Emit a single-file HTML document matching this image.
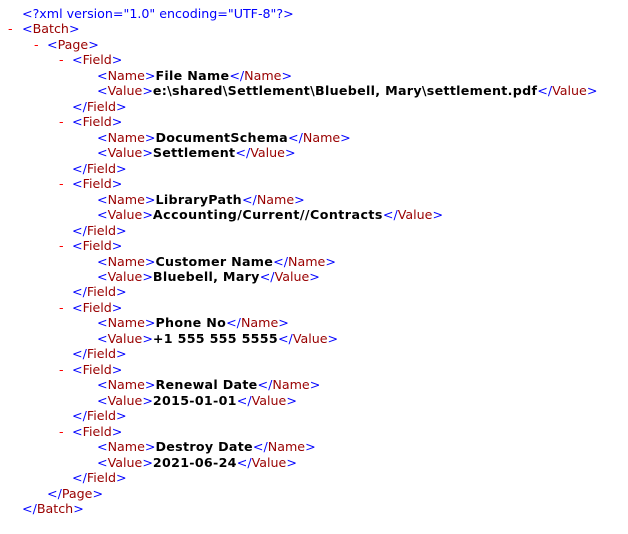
<!DOCTYPE html>
<html><head><meta charset="utf-8"><style>
html,body{margin:0;padding:0;background:#fff;width:628px;height:528px;overflow:hidden}
body{font-family:"DejaVu Sans",Verdana,sans-serif;font-size:12.65px;padding-top:6px}
.l{height:15.47px;line-height:15.47px;white-space:pre;position:relative}
.d{position:absolute;color:#f00}
.b{color:#00f}.t{color:#900}.x{color:#000;font-weight:bold;letter-spacing:0.3px}
</style></head><body>
<div class="l" style="padding-left:22px"><span class="b">&lt;?xml version="1.0" encoding="UTF-8"?&gt;</span></div>
<div class="l" style="padding-left:22px"><span class="d" style="left:8px">-</span><span class="b">&lt;</span><span class="t">Batch</span><span class="b">&gt;</span></div>
<div class="l" style="padding-left:47px"><span class="d" style="left:34px">-</span><span class="b">&lt;</span><span class="t">Page</span><span class="b">&gt;</span></div>

<div class="l" style="padding-left:72px"><span class="d" style="left:59px">-</span><span class="b">&lt;</span><span class="t">Field</span><span class="b">&gt;</span></div>
<div class="l" style="padding-left:97px"><span class="b">&lt;</span><span class="t">Name</span><span class="b">&gt;</span><span class="x">File Name</span><span class="b">&lt;/</span><span class="t">Name</span><span class="b">&gt;</span></div>
<div class="l" style="padding-left:97px"><span class="b">&lt;</span><span class="t">Value</span><span class="b">&gt;</span><span class="x">e:\shared\Settlement\Bluebell, Mary\settlement.pdf</span><span class="b">&lt;/</span><span class="t">Value</span><span class="b">&gt;</span></div>
<div class="l" style="padding-left:72px"><span class="b">&lt;/</span><span class="t">Field</span><span class="b">&gt;</span></div>

<div class="l" style="padding-left:72px"><span class="d" style="left:59px">-</span><span class="b">&lt;</span><span class="t">Field</span><span class="b">&gt;</span></div>
<div class="l" style="padding-left:97px"><span class="b">&lt;</span><span class="t">Name</span><span class="b">&gt;</span><span class="x">DocumentSchema</span><span class="b">&lt;/</span><span class="t">Name</span><span class="b">&gt;</span></div>
<div class="l" style="padding-left:97px"><span class="b">&lt;</span><span class="t">Value</span><span class="b">&gt;</span><span class="x">Settlement</span><span class="b">&lt;/</span><span class="t">Value</span><span class="b">&gt;</span></div>
<div class="l" style="padding-left:72px"><span class="b">&lt;/</span><span class="t">Field</span><span class="b">&gt;</span></div>

<div class="l" style="padding-left:72px"><span class="d" style="left:59px">-</span><span class="b">&lt;</span><span class="t">Field</span><span class="b">&gt;</span></div>
<div class="l" style="padding-left:97px"><span class="b">&lt;</span><span class="t">Name</span><span class="b">&gt;</span><span class="x">LibraryPath</span><span class="b">&lt;/</span><span class="t">Name</span><span class="b">&gt;</span></div>
<div class="l" style="padding-left:97px"><span class="b">&lt;</span><span class="t">Value</span><span class="b">&gt;</span><span class="x" style="letter-spacing:0.45px">Accounting/Current//Contracts</span><span class="b">&lt;/</span><span class="t">Value</span><span class="b">&gt;</span></div>
<div class="l" style="padding-left:72px"><span class="b">&lt;/</span><span class="t">Field</span><span class="b">&gt;</span></div>

<div class="l" style="padding-left:72px"><span class="d" style="left:59px">-</span><span class="b">&lt;</span><span class="t">Field</span><span class="b">&gt;</span></div>
<div class="l" style="padding-left:97px"><span class="b">&lt;</span><span class="t">Name</span><span class="b">&gt;</span><span class="x">Customer Name</span><span class="b">&lt;/</span><span class="t">Name</span><span class="b">&gt;</span></div>
<div class="l" style="padding-left:97px"><span class="b">&lt;</span><span class="t">Value</span><span class="b">&gt;</span><span class="x">Bluebell, Mary</span><span class="b">&lt;/</span><span class="t">Value</span><span class="b">&gt;</span></div>
<div class="l" style="padding-left:72px"><span class="b">&lt;/</span><span class="t">Field</span><span class="b">&gt;</span></div>

<div class="l" style="padding-left:72px"><span class="d" style="left:59px">-</span><span class="b">&lt;</span><span class="t">Field</span><span class="b">&gt;</span></div>
<div class="l" style="padding-left:97px"><span class="b">&lt;</span><span class="t">Name</span><span class="b">&gt;</span><span class="x">Phone No</span><span class="b">&lt;/</span><span class="t">Name</span><span class="b">&gt;</span></div>
<div class="l" style="padding-left:97px"><span class="b">&lt;</span><span class="t">Value</span><span class="b">&gt;</span><span class="x">+1 555 555 5555</span><span class="b">&lt;/</span><span class="t">Value</span><span class="b">&gt;</span></div>
<div class="l" style="padding-left:72px"><span class="b">&lt;/</span><span class="t">Field</span><span class="b">&gt;</span></div>

<div class="l" style="padding-left:72px"><span class="d" style="left:59px">-</span><span class="b">&lt;</span><span class="t">Field</span><span class="b">&gt;</span></div>
<div class="l" style="padding-left:97px"><span class="b">&lt;</span><span class="t">Name</span><span class="b">&gt;</span><span class="x">Renewal Date</span><span class="b">&lt;/</span><span class="t">Name</span><span class="b">&gt;</span></div>
<div class="l" style="padding-left:97px"><span class="b">&lt;</span><span class="t">Value</span><span class="b">&gt;</span><span class="x">2015-01-01</span><span class="b">&lt;/</span><span class="t">Value</span><span class="b">&gt;</span></div>
<div class="l" style="padding-left:72px"><span class="b">&lt;/</span><span class="t">Field</span><span class="b">&gt;</span></div>

<div class="l" style="padding-left:72px"><span class="d" style="left:59px">-</span><span class="b">&lt;</span><span class="t">Field</span><span class="b">&gt;</span></div>
<div class="l" style="padding-left:97px"><span class="b">&lt;</span><span class="t">Name</span><span class="b">&gt;</span><span class="x">Destroy Date</span><span class="b">&lt;/</span><span class="t">Name</span><span class="b">&gt;</span></div>
<div class="l" style="padding-left:97px"><span class="b">&lt;</span><span class="t">Value</span><span class="b">&gt;</span><span class="x">2021-06-24</span><span class="b">&lt;/</span><span class="t">Value</span><span class="b">&gt;</span></div>
<div class="l" style="padding-left:72px"><span class="b">&lt;/</span><span class="t">Field</span><span class="b">&gt;</span></div>

<div class="l" style="padding-left:47px"><span class="b">&lt;/</span><span class="t">Page</span><span class="b">&gt;</span></div>
<div class="l" style="padding-left:22px"><span class="b">&lt;/</span><span class="t">Batch</span><span class="b">&gt;</span></div>
</body></html>
